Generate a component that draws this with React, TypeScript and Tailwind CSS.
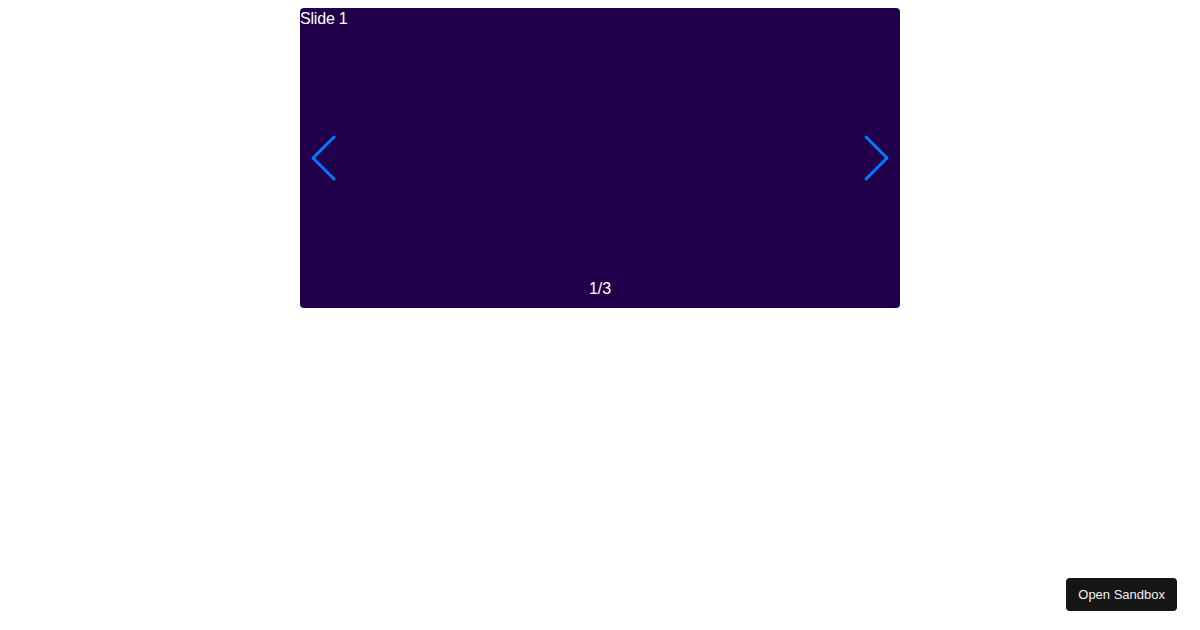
import React from "react";

export default function App() {
  return (
    <div className="relative w-[1200px] h-[630px] bg-white" style={{ fontFamily: '"Liberation Sans", Arial, sans-serif' }}>
      <div className="flex justify-center pt-[8px]">
        <div className="relative w-[600px] h-[300px] bg-[#21004c] rounded-[4px] overflow-hidden text-white">
          <div className="text-[16px] leading-[19px] pt-[1px] tracking-[-0.2px]">Slide 1</div>
          <button className="absolute left-[10px] top-[121px] w-[27px] h-[58px] flex items-center justify-center">
            <svg width="27" height="48" viewBox="0 0 27 48" fill="none">
              <path d="M24 3 L3 24 L24 45" stroke="#007aff" strokeWidth="3" strokeLinecap="round" strokeLinejoin="round" />
            </svg>
          </button>
          <button className="absolute right-[10px] top-[121px] w-[27px] h-[58px] flex items-center justify-center">
            <svg width="27" height="48" viewBox="0 0 27 48" fill="none">
              <path d="M3 3 L24 24 L3 45" stroke="#007aff" strokeWidth="3" strokeLinecap="round" strokeLinejoin="round" />
            </svg>
          </button>
          <div className="absolute left-0 right-0 bottom-[10px] text-center text-[16px] leading-[18px]">1/3</div>
        </div>
      </div>
      <button className="absolute right-[23px] bottom-[19px] h-[33px] px-[12px] bg-[#151515] rounded-[4px] text-[13px] text-[#f0f0f0]">
        Open Sandbox
      </button>
    </div>
  );
}
